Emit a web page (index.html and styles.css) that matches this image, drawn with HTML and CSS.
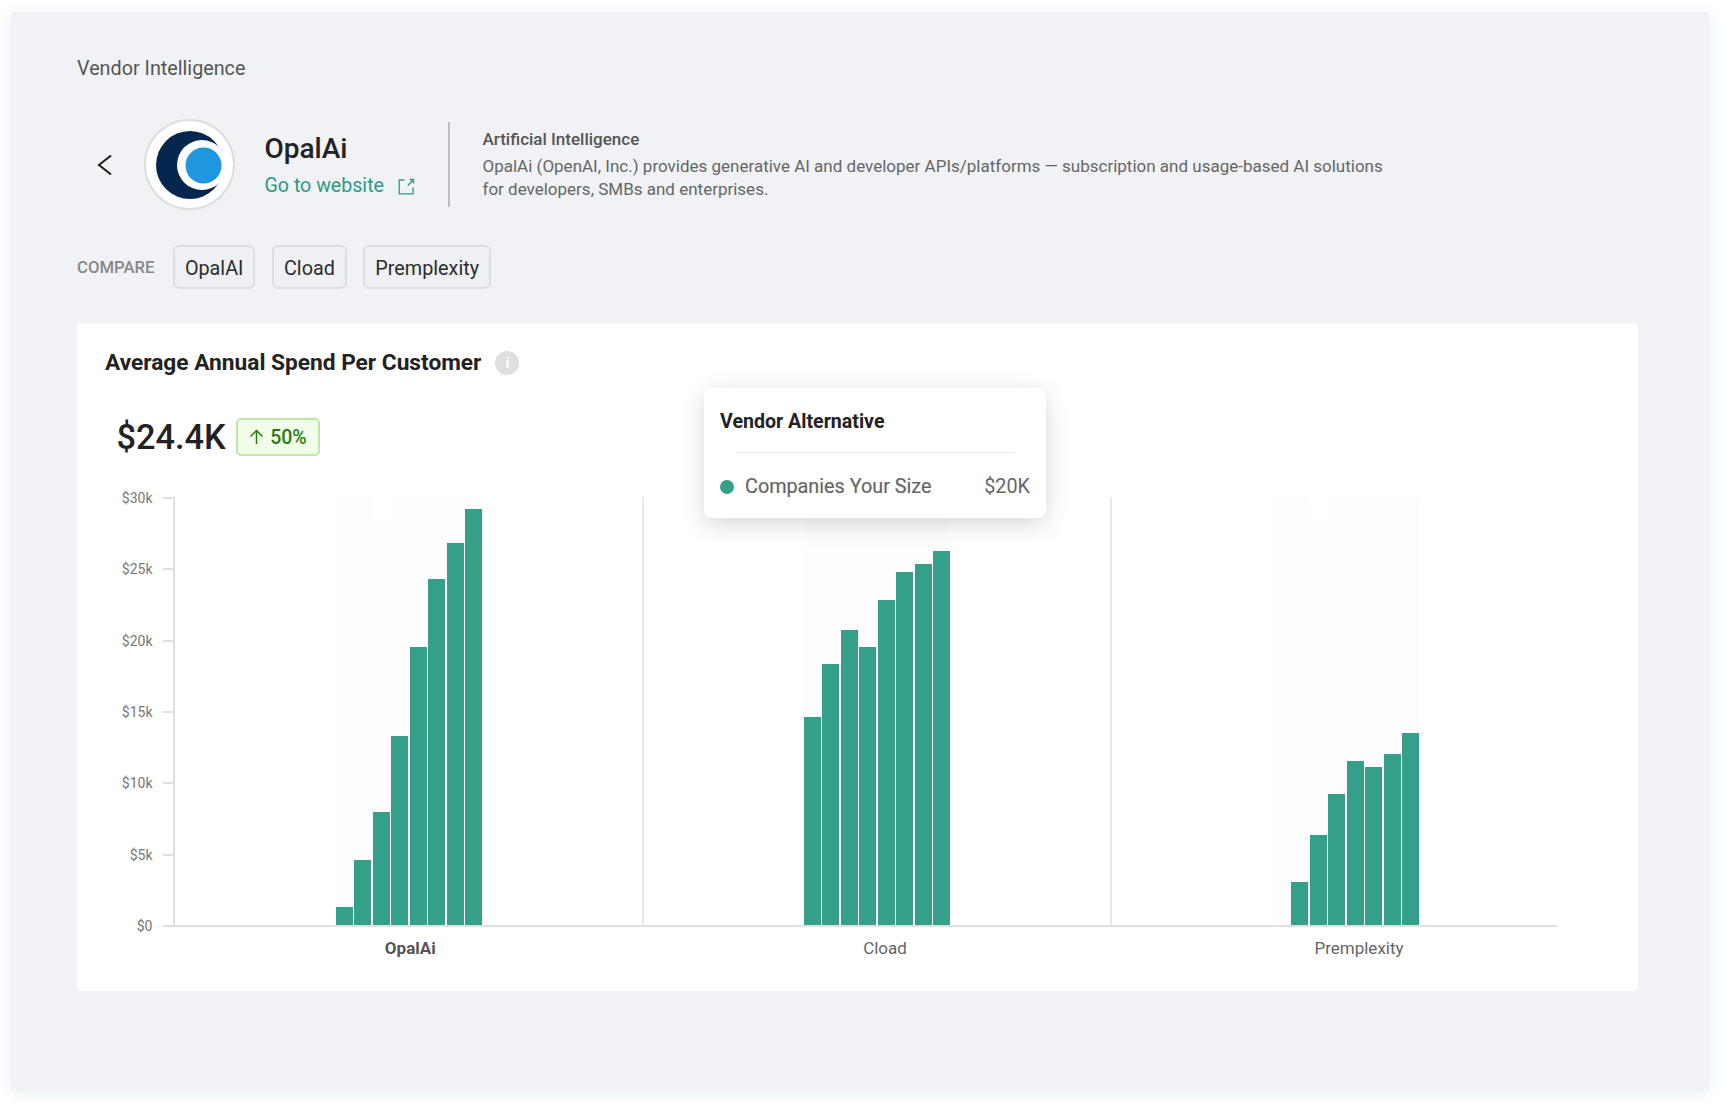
FILE: index.html
```html
<!DOCTYPE html>
<html lang="en">
<head>
<meta charset="utf-8">
<title>Vendor Intelligence</title>
<link rel="stylesheet" href="styles.css">
</head>
<body>
<main class="panel">
  <h1 class="page-title">Vendor Intelligence</h1>
  <section class="vendor">
    <button class="back" aria-label="Back">
      <svg width="18" height="22" viewBox="0 0 18 22"><path d="M15 1.500 3 11l12 9.500" fill="none" stroke="#1c1c1c" stroke-width="2"/></svg>
    </button>
    <div class="logo">
      <svg width="88" height="88" viewBox="0 0 88 88">
        <circle cx="45" cy="44" r="34" fill="#05264f"/>
        <circle cx="57" cy="44" r="25" fill="#fff"/>
        <circle cx="58.500" cy="44.500" r="18" fill="#1f96e0"/>
      </svg>
    </div>
    <div class="vendor-name">
      <div class="name">OpalAi</div>
      <a class="site-link">Go to website
        <svg class="ext" width="17" height="17" viewBox="0 0 17 17"><path d="M6.500 2H1.200v13.800H15V9.500M9.800 7.500 15 2M11.500 1.500h4v4" fill="none" stroke="#2e9a83" stroke-width="1.300"/></svg>
      </a>
    </div>
    <div class="vendor-desc">
      <div class="category">Artificial Intelligence</div>
      <p class="desc">OpalAi (OpenAI, Inc.) provides generative AI and developer APIs/platforms — subscription and usage-based AI solutions<br>for developers, SMBs and enterprises.</p>
    </div>
  </section>
  <section class="compare">
    <span class="compare-label">COMPARE</span>
    <span class="chip">OpalAI</span>
    <span class="chip">Cload</span>
    <span class="chip">Premplexity</span>
  </section>
  <section class="card">
    <div class="card-head">
      <h2 class="card-title">Average Annual Spend Per Customer</h2>
      <span class="info">i</span>
    </div>
    <div class="kpi">
      <span class="kpi-value">$24.4K</span>
      <span class="badge">
        <svg width="15" height="16" viewBox="0 0 15 16"><path d="M7.500 15V1.500M1.500 7.500l6-6 6 6" fill="none" stroke="#2c7a14" stroke-width="1.500"/></svg>
        50%
      </span>
    </div>
    <div class="chart">
      <div class="y-axis">
        <div class="y-row"><span>$30k</span><i></i></div>
        <div class="y-row"><span>$25k</span><i></i></div>
        <div class="y-row"><span>$20k</span><i></i></div>
        <div class="y-row"><span>$15k</span><i></i></div>
        <div class="y-row"><span>$10k</span><i></i></div>
        <div class="y-row"><span>$5k</span><i></i></div>
        <div class="y-row"><span>$0</span><i></i></div>
      </div>
      <div class="plot-wrap">
        <div class="plot">
          <div class="group g1">
            <div class="ghost notch">
              <div class="bar" style="height:18px"></div>
              <div class="bar" style="height:65px"></div>
              <div class="bar" style="height:113px"></div>
              <div class="bar" style="height:189px"></div>
              <div class="bar" style="height:278px"></div>
              <div class="bar" style="height:346px"></div>
              <div class="bar" style="height:382px"></div>
              <div class="bar" style="height:416px"></div>
            </div>
          </div>
          <div class="group g2">
            <div class="ghost">
              <div class="bar" style="height:208px"></div>
              <div class="bar" style="height:261px"></div>
              <div class="bar" style="height:295px"></div>
              <div class="bar" style="height:278px"></div>
              <div class="bar" style="height:325px"></div>
              <div class="bar" style="height:353px"></div>
              <div class="bar" style="height:361px"></div>
              <div class="bar" style="height:374px"></div>
            </div>
          </div>
          <div class="group g3">
            <div class="ghost notch">
              <div class="bar" style="height:0"></div>
              <div class="bar" style="height:43px"></div>
              <div class="bar" style="height:90px"></div>
              <div class="bar" style="height:131px"></div>
              <div class="bar" style="height:164px"></div>
              <div class="bar" style="height:158px"></div>
              <div class="bar" style="height:171px"></div>
              <div class="bar" style="height:192px"></div>
            </div>
          </div>
        </div>
        <div class="x-labels">
          <span class="x-active">OpalAi</span>
          <span>Cload</span>
          <span>Premplexity</span>
        </div>
      </div>
    </div>
    <aside class="tooltip">
      <div class="tip-title">Vendor Alternative</div>
      <hr class="tip-rule">
      <div class="tip-row">
        <span class="tip-dot"></span>
        <span class="tip-label">Companies Your Size</span>
        <span class="tip-value">$20K</span>
      </div>
    </aside>
  </section>
</main>
</body>
</html>
```
FILE: styles.css
```css
* { box-sizing: border-box; }
html, body { margin: 0; height: 100%; }
body {
  background: #fff;
  font-family: Roboto, "Liberation Sans", sans-serif;
  padding: 12px 17px 17px 11px;
  overflow: hidden;
}
.panel {
  height: 1079px;
  background: #f0f2f6;
  box-shadow: 0 2px 14px rgba(90, 170, 150, .16);
  padding: 45px 71px 0 66px;
}
.page-title {
  margin: 0;
  font-size: 19.750px;
  line-height: 24px;
  font-weight: 400;
  color: #555;
}
.vendor {
  display: flex;
  align-items: center;
  margin-top: 38px;
  height: 91px;
}
.back {
  width: 18px;
  height: 22px;
  padding: 0;
  margin-left: 19px;
  border: 0;
  background: none;
  display: block;
}
.logo {
  width: 91px;
  height: 91px;
  margin-left: 29.500px;
  border-radius: 50%;
  background: #fff;
  border: 2px solid #dedede;
  flex: none;
  display: flex;
  align-items: center;
  justify-content: center;
  overflow: hidden;
}
.logo svg { flex: none; display: block; margin: -1.500px; }
.vendor-name { margin-left: 30px; width: 183px; padding-top: 3px; }
.name {
  font-size: 28px;
  line-height: 32px;
  font-weight: 500;
  color: #222;
}
.site-link {
  display: flex;
  align-items: center;
  gap: 14px;
  margin-top: 8px;
  font-size: 19.600px;
  line-height: 26px;
  color: #2e9a83;
}
.vendor-desc {
  height: 85px;
  border-left: 2px solid #bdbdbd;
  padding-left: 33px;
  display: flex;
  flex-direction: column;
  justify-content: center;
}
.category {
  font-size: 17px;
  line-height: 22px;
  font-weight: 500;
  color: #555;
}
.desc {
  margin: 5px 0 0;
  font-size: 17px;
  line-height: 23px;
  color: #666;
}
.compare {
  display: flex;
  align-items: center;
  margin-top: 35px;
  height: 44px;
}
.compare-label {
  font-size: 16.700px;
  font-weight: 500;
  color: #888;
  margin-right: 18.500px;
}
.chip {
  height: 44px;
  padding: 2px 10px 0;
  margin-right: 16.500px;
  display: flex;
  align-items: center;
  font-size: 19.800px;
  color: #2c2c2c;
  background: #eef0f3;
  border: 2px solid #dcdee0;
  border-radius: 6px;
}
.card {
  position: relative;
  margin-top: 34px;
  height: 668px;
  background: #fff;
  border-radius: 4px;
  padding: 27px 28px 0;
}
.card-head {
  display: flex;
  align-items: center;
  gap: 14px;
  height: 26px;
}
.card-title {
  margin: 0;
  font-size: 22.700px;
  line-height: 26px;
  font-weight: 700;
  color: #222;
}
.info {
  width: 24px;
  height: 24px;
  border-radius: 50%;
  background: #dfdfdf;
  color: #fff;
  font-size: 15px;
  font-weight: 700;
  display: flex;
  align-items: center;
  justify-content: center;
}
.kpi {
  display: flex;
  align-items: center;
  gap: 10px;
  margin: 42px 0 0 11.500px;
  height: 38px;
}
.kpi-value {
  font-size: 34.300px;
  line-height: 40px;
  font-weight: 500;
  color: #222;
}
.badge {
  display: flex;
  align-items: center;
  gap: 6px;
  height: 38px;
  padding: 0 11.500px;
  background: #f1fce9;
  border: 2px solid #bde8a5;
  border-radius: 5px;
  font-size: 19.500px;
  font-weight: 500;
  color: #2c7a14;
}
.chart {
  display: flex;
  margin-top: 41px;
}
.y-axis {
  width: 67.500px;
  height: 430px;
  display: flex;
  flex-direction: column;
  justify-content: space-between;
}
.y-row {
  height: 2px;
  display: flex;
  align-items: center;
  justify-content: flex-end;
  font-size: 14px;
  color: #777;
}
.y-row span { margin-right: 10px; }
.y-row i { width: 10px; height: 2px; background: #e0e0e0; }
.plot-wrap { width: 1384px; }
.plot {
  height: 430px;
  display: grid;
  grid-template-columns: 469px 468px 443px;
  border-left: 2px solid #e0e0e0;
  border-bottom: 2px solid #e0e0e0;
}
.group {
  display: flex;
  align-items: flex-end;
  padding-left: 161.500px;
  border-right: 2px solid #e8e8e8;
}
.g2 { padding-left: 160.500px; }
.g3 { border-right: 0; padding-left: 161.500px; }
.ghost {
  position: relative;
  width: 146px;
  height: 100%;
  display: flex;
  align-items: flex-end;
  justify-content: space-between;
  background: #fdfdfd;
}
.notch::before {
  content: "";
  position: absolute;
  left: 36px;
  top: 0;
  width: 19px;
  height: 23px;
  background: #fff;
}
.bar {
  position: relative;
  width: 17px;
  background: #35a08a;
}
.x-labels {
  display: grid;
  grid-template-columns: 475.500px 474px 474px;
  margin-top: 11px;
  font-size: 17px;
  line-height: 20px;
  color: #666;
  text-align: center;
}
.x-active { font-weight: 700; color: #555; }
.tooltip {
  position: absolute;
  left: 627px;
  top: 65px;
  width: 342px;
  height: 130px;
  padding: 22px 16px 0;
  background: #fff;
  border-radius: 8px;
  box-shadow: 0 6px 24px rgba(0, 0, 0, .16);
}
.tip-title {
  font-size: 19.600px;
  line-height: 24px;
  font-weight: 700;
  color: #222;
}
.tip-rule {
  margin: 18px 15px 0;
  border: 0;
  border-top: 1.500px solid #eee;
}
.tip-row {
  display: flex;
  align-items: center;
  margin-top: 22px;
  font-size: 19.800px;
  line-height: 24px;
  color: #666;
}
.tip-dot {
  width: 14px;
  height: 14px;
  border-radius: 50%;
  background: #35a08a;
  margin-right: 11px;
}
.tip-label { flex: 1; -webkit-text-stroke: .2px #666; }
```
